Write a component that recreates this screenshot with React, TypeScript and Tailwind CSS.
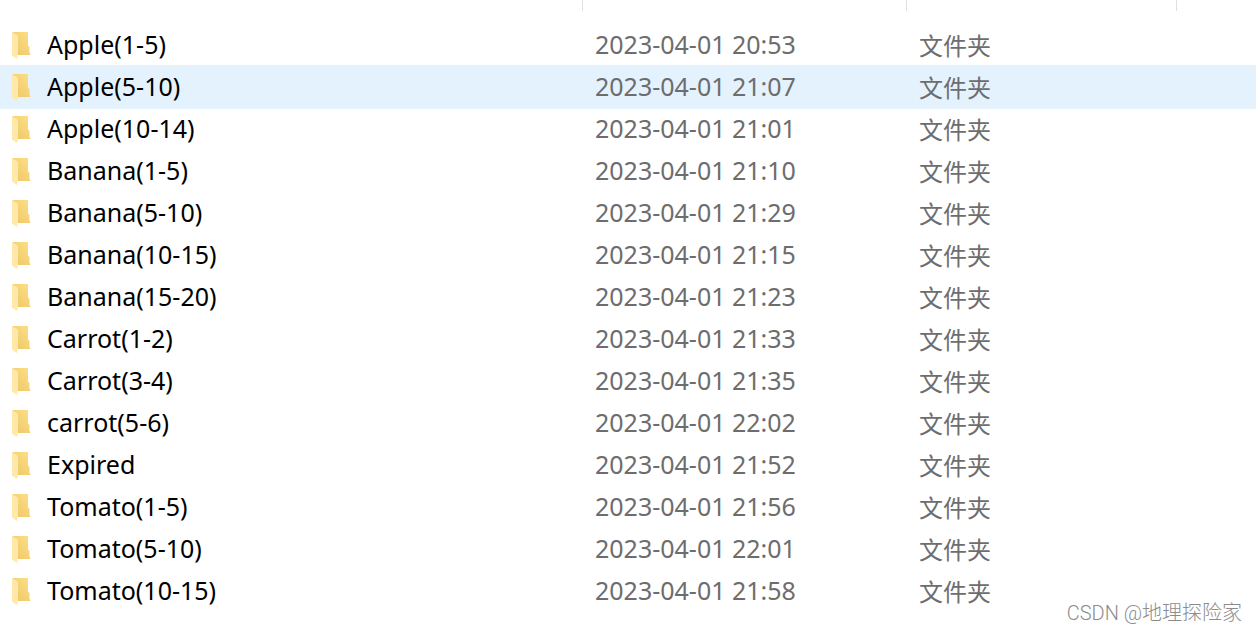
type FileRow = {
  name: string
  modified: string
  selected?: boolean
}

const files: FileRow[] = [
  { name: 'Apple(1-5)', modified: '2023-04-01 20:53' },
  { name: 'Apple(5-10)', modified: '2023-04-01 21:07', selected: true },
  { name: 'Apple(10-14)', modified: '2023-04-01 21:01' },
  { name: 'Banana(1-5)', modified: '2023-04-01 21:10' },
  { name: 'Banana(5-10)', modified: '2023-04-01 21:29' },
  { name: 'Banana(10-15)', modified: '2023-04-01 21:15' },
  { name: 'Banana(15-20)', modified: '2023-04-01 21:23' },
  { name: 'Carrot(1-2)', modified: '2023-04-01 21:33' },
  { name: 'Carrot(3-4)', modified: '2023-04-01 21:35' },
  { name: 'carrot(5-6)', modified: '2023-04-01 22:02' },
  { name: 'Expired', modified: '2023-04-01 21:52' },
  { name: 'Tomato(1-5)', modified: '2023-04-01 21:56' },
  { name: 'Tomato(5-10)', modified: '2023-04-01 22:01' },
  { name: 'Tomato(10-15)', modified: '2023-04-01 21:58' },
]

function FolderIcon() {
  return (
    <svg width="19" height="32" viewBox="0 0 19 32" className="shrink-0" aria-hidden="true">
      <defs>
        <linearGradient id="folder-back" x1="0" y1="1" x2="1" y2="0">
          <stop offset="0" stopColor="#ecc664" />
          <stop offset="1" stopColor="#fedf88" />
        </linearGradient>
        <linearGradient id="folder-flap" x1="0" y1="0" x2="1" y2="1">
          <stop offset="0" stopColor="#ffe7a6" />
          <stop offset="1" stopColor="#ffe9ab" />
        </linearGradient>
      </defs>
      <path d="M0.5 4H16V17.5L17.5 19V24.5L18.5 27H5L1 24Z" fill="url(#folder-back)" />
      <path d="M0 4.5L4.5 6.5Q6 7.5 6 9V26.5L5 31L0 27.5Z" fill="url(#folder-flap)" />
    </svg>
  )
}

export default function App() {
  return (
    <main className="relative min-h-screen bg-white font-['Noto_Sans','Noto_Sans_CJK_SC',sans-serif] text-[25px] leading-8">
      <table className="w-full table-fixed border-collapse text-left">
        <colgroup>
          <col className="w-[583px]" />
          <col className="w-[324px]" />
          <col className="w-[270px]" />
          <col />
        </colgroup>
        <thead>
          <tr className="h-6 align-top">
            <td className="p-0"><div className="h-[11px] border-r border-[#e0e0e0]" /></td>
            <td className="p-0"><div className="h-[11px] border-r border-[#e0e0e0]" /></td>
            <td className="p-0"><div className="h-[11px] border-r border-[#e0e0e0]" /></td>
            <td className="p-0" />
          </tr>
        </thead>
        <tbody>
          {files.map((file) => (
            <tr
              key={file.name}
              className={file.selected ? 'h-[42px] bg-[#e4f2fe] shadow-[0_0_0_1px_#e4f2fe]' : 'h-[42px]'}
            >
              <td className="p-0 pb-0.5 pl-3">
                <div className="flex items-center gap-4 text-black">
                  <FolderIcon />
                  <span>{file.name}</span>
                </div>
              </td>
              <td className="p-0 pb-0.5 pl-3 text-[#6d6d6d]">{file.modified}</td>
              <td className="p-0 pl-3 font-['Noto_Sans_CJK_SC',sans-serif] text-2xl leading-8 text-[#6d6d6d]">文件夹</td>
              <td className="p-0" />
            </tr>
          ))}
        </tbody>
      </table>
      <p className="absolute right-3.5 bottom-1 font-[Roboto,'Noto_Sans_CJK_SC',sans-serif] text-xl leading-7 font-light text-[#8c8c8c]">
        CSDN @地理探险家
      </p>
    </main>
  )
}
